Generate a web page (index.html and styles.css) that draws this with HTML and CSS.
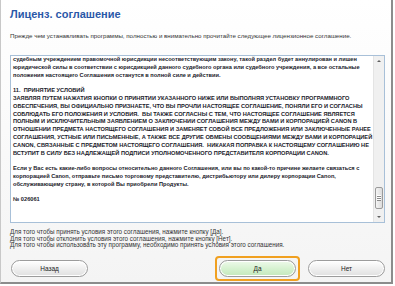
FILE: index.html
```html
<!DOCTYPE html>
<html lang="ru">
<head>
    <meta charset="UTF-8">
    <title>Лиценз. соглашение</title>
    <link rel="stylesheet" href="styles.css">
</head>
<body>
    <div class="window">
        <h1 class="title">Лиценз. соглашение</h1>
        <p class="intro">Прежде чем устанавливать программы, полностью и внимательно прочитайте следующее лицензионное соглашение.</p>

        <div class="license">
            <div class="license-text">
                <p>судебным учреждением правомочной юрисдикции несоответствующим закону, такой раздел будет аннулирован и лишен<br>
                юридической силы в соответствии с юрисдикцией данного судебного органа или судебного учреждения, а все остальные<br>
                положения настоящего Соглашения останутся в полной силе и действии.</p>
                <p>11.&nbsp; ПРИНЯТИЕ УСЛОВИЙ<br>
                ЗАЯВЛЯЯ ПУТЕМ НАЖАТИЯ КНОПКИ О ПРИНЯТИИ УКАЗАННОГО НИЖЕ ИЛИ ВЫПОЛНЯЯ УСТАНОВКУ ПРОГРАММНОГО<br>
                ОБЕСПЕЧЕНИЯ, ВЫ ОФИЦИАЛЬНО ПРИЗНАЕТЕ, ЧТО ВЫ ПРОЧЛИ НАСТОЯЩЕЕ СОГЛАШЕНИЕ, ПОНЯЛИ ЕГО И СОГЛАСНЫ<br>
                СОБЛЮДАТЬ ЕГО ПОЛОЖЕНИЯ И УСЛОВИЯ.&nbsp; ВЫ ТАКЖЕ СОГЛАСНЫ С ТЕМ, ЧТО НАСТОЯЩЕЕ СОГЛАШЕНИЕ ЯВЛЯЕТСЯ<br>
                ПОЛНЫМ И ИСКЛЮЧИТЕЛЬНЫМ ЗАЯВЛЕНИЕМ О ЗАКЛЮЧЕНИИ СОГЛАШЕНИЯ МЕЖДУ ВАМИ И КОРПОРАЦИЕЙ CANON В<br>
                ОТНОШЕНИИ ПРЕДМЕТА НАСТОЯЩЕГО СОГЛАШЕНИЯ И ЗАМЕНЯЕТ СОБОЙ ВСЕ ПРЕДЛОЖЕНИЯ ИЛИ ЗАКЛЮЧЕННЫЕ РАНЕЕ<br>
                СОГЛАШЕНИЯ, УСТНЫЕ ИЛИ ПИСЬМЕННЫЕ, А ТАКЖЕ ВСЕ ДРУГИЕ ОБМЕНЫ СООБЩЕНИЯМИ МЕЖДУ ВАМИ И КОРПОРАЦИЕЙ<br>
                CANON, СВЯЗАННЫЕ С ПРЕДМЕТОМ НАСТОЯЩЕГО СОГЛАШЕНИЯ.&nbsp; НИКАКАЯ ПОПРАВКА К НАСТОЯЩЕМУ СОГЛАШЕНИЮ НЕ<br>
                ВСТУПИТ В СИЛУ БЕЗ НАДЛЕЖАЩЕЙ ПОДПИСИ УПОЛНОМОЧЕННОГО ПРЕДСТАВИТЕЛЯ КОРПОРАЦИИ CANON.</p>
                <p class="gap">Если у Вас есть какие-либо вопросы относительно данного Соглашения, или вы по какой-то причине желаете связаться с<br>
                корпорацией Canon, отправьте письмо торговому представителю, дистрибьютору или дилеру корпорации Canon,<br>
                обслуживающему страну, в которой Вы приобрели Продукты.</p>
                <p>№ 026061</p>
            </div>
            <div class="scrollbar">
                <span class="arrow up"></span>
                <span class="track"><span class="thumb"></span></span>
                <span class="arrow down"></span>
            </div>
        </div>

        <div class="hints">
            <p>Для того чтобы принять условия этого соглашения, нажмите кнопку [Да].</p>
            <p>Для того чтобы отклонить условия этого соглашения, нажмите кнопку [Нет].</p>
            <p>Для того чтобы использовать эту программу, необходимо принять условия этого соглашения.</p>
        </div>

        <div class="buttons">
            <button class="btn">Назад</button>
            <span class="spacer"></span>
            <span class="focus"><button class="btn btn-yes">Да</button></span>
            <button class="btn">Нет</button>
        </div>
    </div>
</body>
</html>
```

FILE: styles.css
```css
body {
    margin: 0;
    background: #fff;
    font-family: 'Liberation Sans', Arial, sans-serif;
}
.window {
    box-sizing: border-box;
    width: 393px;
    height: 284px;
    padding: 0 6px 0 9px;
    border-left: 1px solid #c8c8c8;
    border-right: 2px solid #8c8c8c;
    border-bottom: 2px solid #8c8c8c;
    background: linear-gradient(#ffffff, #f4f4f4);
}
.title {
    margin: 0;
    padding-top: 8px;
    font-size: 11px;
    line-height: 13px;
    font-weight: bold;
    color: #2a58a8;
}
.intro {
    margin: 11px 0 0;
    font-size: 6.2px;
    line-height: 8px;
    color: #333;
}
.license {
    display: flex;
    height: 166px;
    margin-top: 15px;
    border: 1px solid #a8c0d8;
    background: #fff;
}
.license-text {
    flex: 1;
    overflow: hidden;
    padding: 0 2px;
    font-size: 5.65px;
    line-height: 7.8px;
    font-weight: bold;
    color: #1a1a2a;
    white-space: nowrap;
}
.license-text p {
    margin: 0 0 7.8px;
}
.license-text p.gap {
    margin-top: 7.8px;
}
.scrollbar {
    display: flex;
    flex-direction: column;
    width: 10px;
    background: #f0f0f0;
    border-left: 1px solid #e4e4e4;
}
.arrow {
    height: 10px;
    position: relative;
}
.arrow::after {
    content: "";
    position: absolute;
    left: 3px;
    top: 4px;
    border-left: 2px solid transparent;
    border-right: 2px solid transparent;
}
.arrow.up::after {
    border-bottom: 2px solid #606060;
}
.arrow.down::after {
    border-top: 2px solid #606060;
}
.track {
    flex: 1;
    display: flex;
    flex-direction: column;
    justify-content: flex-end;
    padding: 0 1px 3px;
}
.thumb {
    height: 20px;
    border: 1px solid #9a9a9a;
    border-radius: 2px;
    background-image: repeating-linear-gradient(#fff 0 1px, #8a8a8a 1px 2px), linear-gradient(90deg, #f4f4f4, #dcdcdc);
    background-size: 4px 6px, 100% 100%;
    background-position: center, 0 0;
    background-repeat: no-repeat;
}
.hints {
    margin-top: 6px;
    font-size: 6.3px;
    line-height: 6.6px;
    color: #333;
}
.hints p {
    margin: 0;
}
.buttons {
    display: flex;
    align-items: center;
    margin-top: 7px;
    padding-left: 1px;
}
.spacer {
    flex: 1;
}
.btn {
    width: 77px;
    height: 17px;
    padding: 0;
    border: 1px solid #9c9c9c;
    border-radius: 9px;
    background: linear-gradient(#ffffff, #ececec 60%, #e0e0e0);
    box-shadow: inset 0 0 0 1px #fff;
    font-family: 'Liberation Sans', Arial, sans-serif;
    font-size: 6.5px;
    color: #222;
}
.focus {
    display: flex;
    padding: 2px;
    margin-right: 8px;
    border: 2px solid #f0a020;
    border-radius: 4px;
}
.btn-yes {
    background: linear-gradient(#eefaea, #d2f0cc 60%, #c4e8bc);
}
```
